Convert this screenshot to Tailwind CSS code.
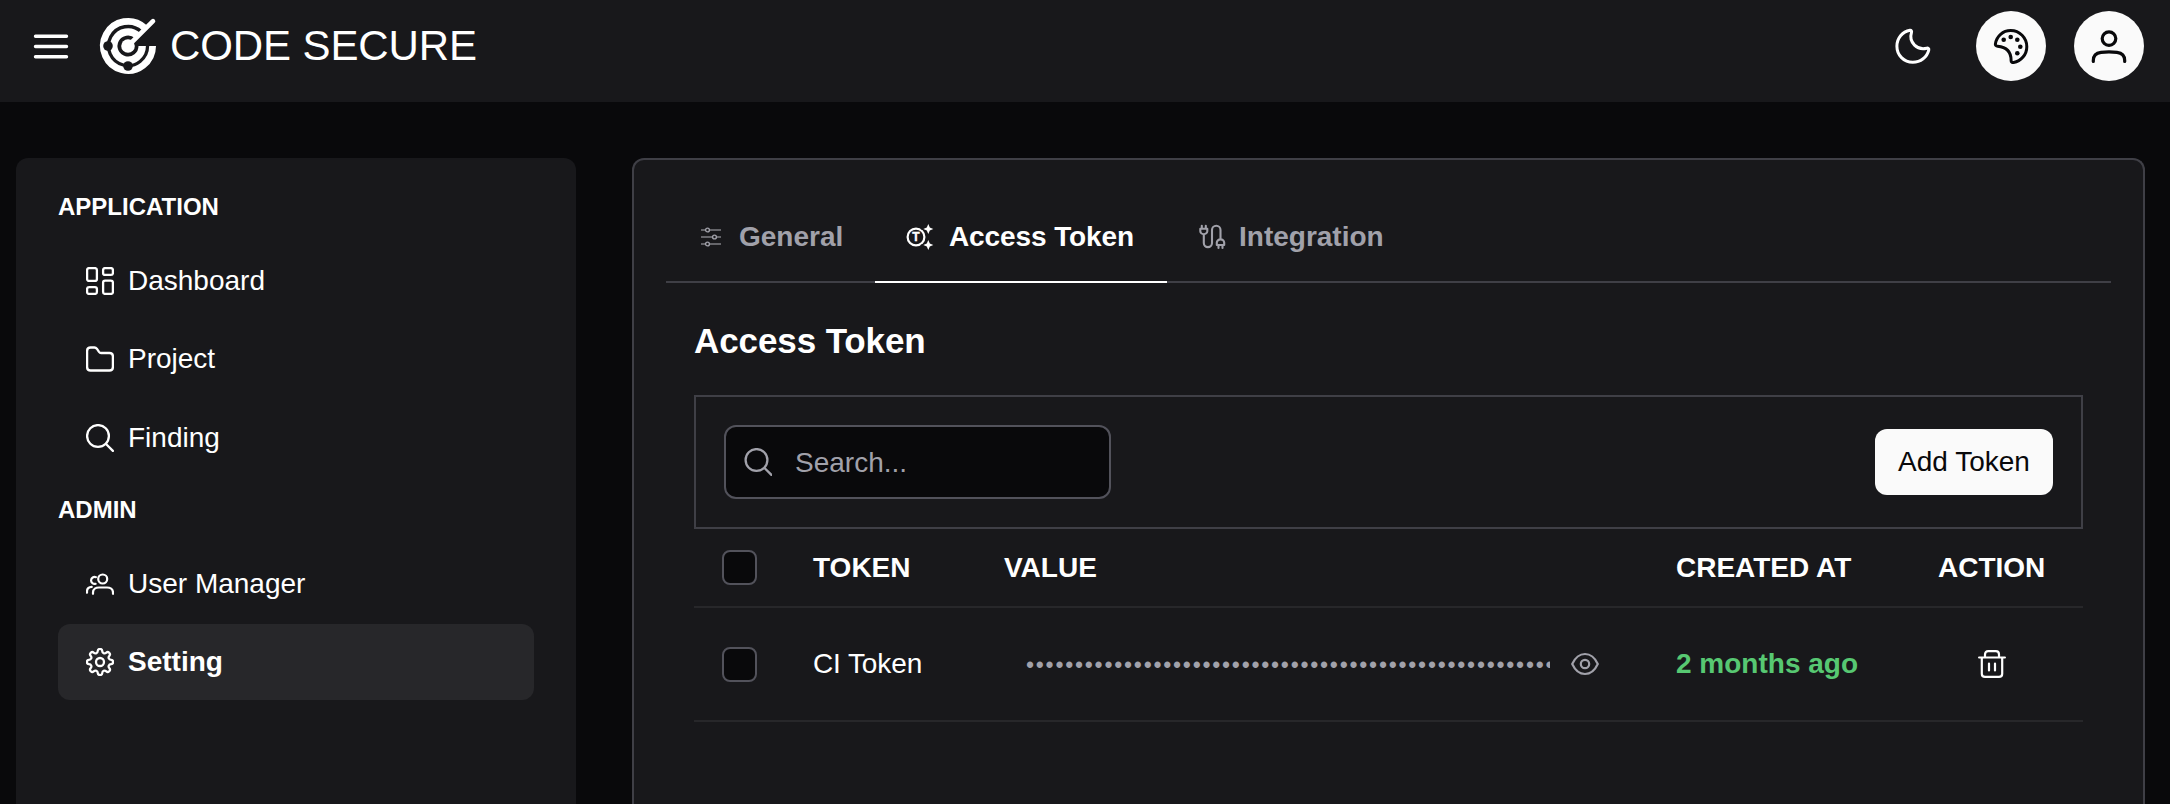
<!DOCTYPE html>
<html lang="en">
<head>
<meta charset="utf-8">
<title>Code Secure</title>
<script src="https://cdn.jsdelivr.net/npm/@tailwindcss/browser@4"></script>
</head>
<body class="flex h-[804px] flex-col overflow-hidden bg-[#09090b] font-['Liberation_Sans',Arial,sans-serif] text-[28px] leading-8 text-white">
<header class="flex h-[102px] shrink-0 items-start justify-between bg-[#18181b] pl-[33px] pr-[26px] pt-[11px]">
  <div class="flex h-[70px] items-center">
    <svg class="size-9" viewBox="0 0 36 36" fill="none" stroke="currentColor" stroke-width="3.400" stroke-linecap="round"><path d="M2.500 8.300h31M2.500 18.500h31M2.500 28.700h31"/></svg>
    <svg class="ml-[31px] size-14 shrink-0 overflow-visible" viewBox="-28 -28 56 56" fill="none" stroke="currentColor">
      <path stroke-width="6.8" d="M24.6 0A24.6 24.6 0 1 1 16.5-18.3"/>
      <path stroke-width="7.4" d="M14.2 0A14.2 14.2 0 1 1 9.6-10.4"/>
      <path stroke-width="4.6" stroke-linecap="round" d="M0 0 25-24.8"/>
      <circle r="6.8" fill="currentColor" stroke="none"/>
      <circle cx="-20" r="4.8" fill="#18181b" stroke="none"/>
      <circle cy="20" r="4.8" fill="#18181b" stroke="none"/>
    </svg>
    <span class="ml-[14px] text-[42px] leading-[56px] tracking-[-0.1px]">CODE SECURE</span>
  </div>
  <div class="flex items-center gap-7">
    <button class="flex size-[70px] items-center justify-center">
      <svg class="size-9" viewBox="0 0 36 36" fill="none" stroke="currentColor" stroke-width="3" stroke-linejoin="round"><path d="M15 2.2C7.3 3.6 1.9 10.300 1.900 18.200c0 9 7 16.100 15.900 16.100 7.800 0 14.300-5.200 16-12.500.3-1.300-.8-1.900-2-1.600-4.400 1.100-9 .2-12.300-3.100-3.400-3.500-4.400-8.200-3-12.700.4-1.300-.3-2.400-1.500-2.200Z"/></svg>
    </button>
    <button class="flex size-[70px] items-center justify-center rounded-full bg-[#fafafa] text-[#09090b]">
      <svg class="size-9" viewBox="0 0 36 36" fill="none" stroke="currentColor" stroke-width="3" stroke-linejoin="round"><path d="M2.400 15.900C3.600 8.100 9.900 2.600 17.700 2.600c8.900 0 16.100 7.200 16.100 16.100 0 7.900-5.700 14.500-13.200 15.800-1.600.3-2.500-.5-2.500-2 0-8.700-4.200-13.500-13.500-14.200-1.500-.1-2.400-1-2.200-2.400Z"/><g fill="currentColor" stroke="none"><circle cx="10.700" cy="11.700" r="2.300"/><circle cx="17.700" cy="9" r="2.300"/><circle cx="24.300" cy="11.700" r="2.300"/><circle cx="27.300" cy="18.700" r="2.300"/><circle cx="24.300" cy="25.300" r="2.300"/></g></svg>
    </button>
    <button class="flex size-[70px] items-center justify-center rounded-full bg-[#fafafa] text-[#09090b]">
      <svg class="size-9" viewBox="0 0 36 36" fill="none" stroke="currentColor" stroke-width="3.200" stroke-linecap="round"><circle cx="18" cy="10.600" r="6.800"/><path d="M2.300 33.500v-1c0-5.200 3-7.600 7.700-8.200 5.200-.6 10.800-.6 16 0 4.700.6 7.700 3 7.700 8.200v1"/></svg>
    </button>
  </div>
</header>

<div class="flex min-h-0 flex-1 pl-4 pr-[26px] pt-14">
  <aside class="w-[560px] shrink-0 rounded-t-xl bg-[#18181b] px-[42px] pt-8">
    <h2 class="text-[24px] font-bold leading-[34px]">APPLICATION</h2>
    <nav class="mt-[19px] flex flex-col gap-0.5">
      <a class="flex h-[76px] items-center gap-[14px] rounded-xl px-7">
        <svg class="size-7" viewBox="0 0 28 28" fill="none" stroke="currentColor" stroke-width="2.300"><rect x="1.100" y="1.100" width="9.800" height="12.800" rx="2"/><rect x="17.100" y="1.100" width="9.800" height="6.800" rx="2"/><rect x="1.100" y="20.100" width="9.800" height="6.800" rx="2"/><rect x="17.100" y="13.600" width="9.800" height="13.300" rx="2"/></svg>
        <span>Dashboard</span></a>
      <a class="flex h-[76px] items-center gap-[14px] rounded-xl px-7">
        <svg class="size-7" viewBox="0 0 28 28" fill="none" stroke="currentColor" stroke-width="2.300" stroke-linejoin="round"><path d="M1.100 22V6c0-2.200 1.200-3.500 3.400-3.500h4c1 0 1.700.4 2.300 1.200L13 6.900c.6.800 1.200 1.100 2 1.100h8.500c2.200 0 3.400 1.300 3.400 3.500V22c0 2.200-1.200 3.500-3.400 3.500h-19C2.300 25.500 1.100 24.200 1.100 22Z"/></svg>
        <span>Project</span></a>
      <a class="flex h-[76px] items-center gap-[14px] rounded-xl px-7 pt-px">
        <svg class="size-7" viewBox="0 0 28 28" fill="none" stroke="currentColor" stroke-width="2.300" stroke-linecap="round"><circle cx="12" cy="12" r="10.900"/><path d="m20 20 6.900 6.900"/></svg>
        <span>Finding</span></a>
    </nav>
    <h2 class="mt-[18px] text-[24px] font-bold leading-[34px]">ADMIN</h2>
    <nav class="mt-[19px] flex flex-col gap-0.5">
      <a class="flex h-[76px] items-center gap-[14px] rounded-xl px-7">
        <svg class="size-7" viewBox="0 0 28 28" fill="none" stroke="currentColor" stroke-width="2.200" stroke-linecap="round"><circle cx="16.700" cy="9" r="4.500"/><path d="M7 23.800v-1.300c0-3.400 3-5 6-5h8c3 0 6 1.600 6 5v1.300M9.900 7.200a3.500 3.500 0 1 0-.3 6.600M1 22.700v-1.300c0-2.700 1.800-4.300 4.700-4.500"/></svg>
        <span>User Manager</span></a>
      <a class="flex h-[76px] items-center gap-[14px] rounded-xl bg-[#27272a] px-7 font-bold">
        <svg class="size-7" viewBox="-14 -14 28 28" fill="none" stroke="currentColor" stroke-width="2.300"><circle r="4"/><path id="q" d="M13.040 0Q13.040 2.060 11.200 2.200 9.310 2.320 8.770 3.630 8.230 4.940 9.450 6.350 10.680 7.760 9.220 9.220 7.760 10.680 6.350 9.450 4.940 8.230 3.630 8.770 2.320 9.310 2.200 11.200 2.060 13.040 0 13.040"/><use href="#q" transform="rotate(90)"/><use href="#q" transform="rotate(180)"/><use href="#q" transform="rotate(270)"/></svg>
        <span>Setting</span></a>
    </nav>
  </aside>

  <main class="ml-14 flex-1 rounded-t-xl border-2 border-b-0 border-[#3f3f46] bg-[#18181b] px-8 pt-8">
    <div class="flex h-[91px] border-b-2 border-[#3f3f46] font-bold text-[#a1a1aa]">
      <div class="flex h-[91px] w-[209px] items-center gap-[13px] pb-0.5 pl-8">
        <svg class="size-7 shrink-0" viewBox="0 0 28 28" fill="none" stroke="currentColor" stroke-width="1.400"><path stroke-opacity=".75" d="M3 7h4.500m4 0H23M3 14h11.500m4 0H23M3 21h4.500m4 0H23"/><circle cx="9.500" cy="7" r="1.900"/><circle cx="16.500" cy="14" r="1.900"/><circle cx="9.500" cy="21" r="1.900"/></svg>
        <span>General</span></div>
      <div class="flex h-[91px] w-[292px] items-center gap-[14px] border-b-2 border-white pl-8 text-white">
        <svg class="size-7 shrink-0 overflow-visible" viewBox="0 0 28 28" fill="none"><circle cx="9" cy="14" r="8.400" stroke="currentColor" stroke-width="2.200"/><text x="9" y="18.200" font-size="12" font-weight="700" text-anchor="middle" fill="currentColor" stroke="currentColor" stroke-width=".4">T</text><path fill="currentColor" stroke="#18181b" stroke-width="2.400" paint-order="stroke" d="M21.300 1l1.500 3.500 3.500 1.500-3.500 1.500-1.500 3.500-1.500-3.500L16.300 6l3.500-1.500ZM21.300 17l1.500 3.500 3.500 1.500-3.500 1.500-1.500 3.500-1.500-3.500-3.500-1.500 3.500-1.500Z"/></svg>
        <span class="tracking-[-0.1px]">Access Token</span></div>
      <div class="flex h-[91px] items-center gap-[13px] pb-0.5 pl-[31px]">
        <svg class="size-7 shrink-0" viewBox="0 0 28 28" fill="none" stroke="currentColor" stroke-width="2.100" stroke-linecap="round" stroke-linejoin="round"><path d="M3.800 2.700v2.600M7.800 2.700v2.600M2.300 5.800h7v2.400a3.500 3 0 0 1-7 0ZM5.800 11.300V20a4.100 4.100 0 0 0 8.200 0V7a4.200 4.200 0 0 1 8.500 0v9M18.800 22v-2.400a3.700 3.200 0 0 1 7.400 0V22ZM20.500 22.500v2.500M24.500 22.500v2.500"/></svg>
        <span>Integration</span></div>
    </div>

    <div class="px-7">
      <h1 class="mt-[38px] text-[35px] font-bold leading-10 tracking-[-0.1px]">Access Token</h1>
      <div class="mt-[34px] flex h-[134px] items-center justify-between border-2 border-[#3f3f46] px-7">
        <label class="flex h-[74px] w-[387px] items-center rounded-xl border-2 border-[#52525b] bg-[#09090b] pl-[18px] text-[#a1a1aa]">
          <svg class="size-7" viewBox="0 0 28 28" fill="none" stroke="currentColor" stroke-width="2.300" stroke-linecap="round"><circle cx="12.500" cy="12" r="10.900"/><path d="m20.500 20 6.900 6.900"/></svg>
          <span class="ml-[23px] pt-px">Search...</span>
        </label>
        <button class="h-[66px] w-[178px] rounded-xl bg-[#fafafa] text-[#09090b]">Add Token</button>
      </div>
      <div class="grid h-[79px] grid-cols-[119px_191px_672px_262px_145px] items-center border-b-2 border-[#27272a] font-bold">
        <div class="pl-7"><div class="size-[35px] rounded-lg border-2 border-[#52525b] bg-[#09090b]"></div></div>
        <div>TOKEN</div><div>VALUE</div><div>CREATED AT</div><div>ACTION</div>
      </div>
      <div class="grid h-[114px] grid-cols-[119px_191px_672px_262px_145px] items-center border-b-2 border-[#27272a]">
        <div class="pl-7"><div class="size-[35px] rounded-lg border-2 border-[#52525b] bg-[#09090b]"></div></div>
        <div class="tracking-[-0.1px]">CI Token</div>
        <div class="flex items-center pl-[21px] text-[#a1a1aa]">
          <div class="w-[525px] overflow-hidden whitespace-nowrap pl-px pt-0.5 text-[23px] tracking-[1.75px]">••••••••••••••••••••••••••••••••••••••••••••••••••••••</div>
          <svg class="ml-[21px] size-7" viewBox="0 0 28 28" fill="none" stroke="currentColor" stroke-width="2.200" stroke-linejoin="round"><path d="M1.200 14C4 8 8.500 4 14 4s10 4 12.800 10c-2.800 6-7.300 10-12.800 10S4 20 1.200 14Z"/><circle cx="14" cy="14" r="4.200"/></svg>
        </div>
        <div class="font-bold text-[#57c872]">2 months ago</div>
        <div class="flex w-[107px] justify-center">
          <svg class="size-7" viewBox="0 0 28 28" fill="none" stroke="currentColor" stroke-width="2.200" stroke-linecap="round" stroke-linejoin="round"><path d="M1.100 7.500h25.800M7 7.500v-3c0-2 1.200-3.300 3.200-3.300h7.600c2 0 3.200 1.300 3.200 3.300v3M3.800 7.500v16.200c0 2 1.200 3.200 3.200 3.200h14c2 0 3.200-1.200 3.200-3.200V7.500M11 13.500v7M17 13.500v7"/></svg>
        </div>
      </div>
    </div>
  </main>
</div>
</body>
</html>
